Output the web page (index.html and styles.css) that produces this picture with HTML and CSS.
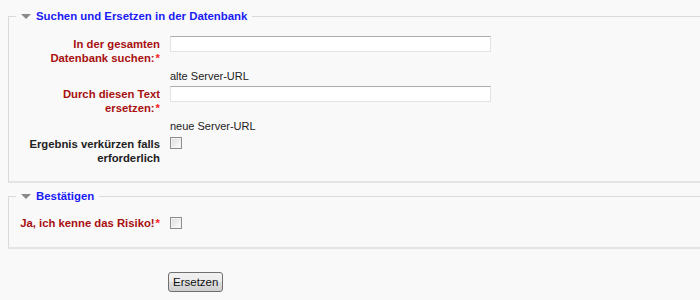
FILE: index.html
```html
<!DOCTYPE html>
<html lang="de">
<head>
<meta charset="utf-8">
<title>Suchen und Ersetzen</title>
<link rel="stylesheet" href="styles.css">
</head>
<body>
<form class="mform">
  <fieldset class="fs">
    <legend class="fs-legend"><span class="tri"></span>Suchen und Ersetzen in der Datenbank</legend>
    <div class="fitem">
      <label class="flabel req">In der gesamten Datenbank suchen:<span class="star">*</span></label>
      <div class="felem"><input type="text" class="ftext"></div>
    </div>
    <div class="fitem">
      <div class="flabel"></div>
      <div class="felem fdesc">alte Server-URL</div>
    </div>
    <div class="fitem">
      <label class="flabel req">Durch diesen Text ersetzen:<span class="star">*</span></label>
      <div class="felem"><input type="text" class="ftext"></div>
    </div>
    <div class="fitem">
      <div class="flabel"></div>
      <div class="felem fdesc">neue Server-URL</div>
    </div>
    <div class="fitem">
      <label class="flabel">Ergebnis verkürzen falls erforderlich</label>
      <div class="felem"><input type="checkbox" class="fcheck"></div>
    </div>
  </fieldset>
  <fieldset class="fs fs2">
    <legend class="fs-legend"><span class="tri"></span>Bestätigen</legend>
    <div class="fitem">
      <label class="flabel req">Ja, ich kenne das Risiko!<span class="star">*</span></label>
      <div class="felem"><input type="checkbox" class="fcheck"></div>
    </div>
  </fieldset>
  <div class="fitem factions">
    <div class="flabel"></div>
    <div class="felem"><button type="button" class="fbtn">Ersetzen</button></div>
  </div>
</form>
</body>
</html>
```

FILE: styles.css
```css
html, body {
  background: #f9f9f9;
}
body {
  margin: 8px 0 0 8px;
  font-family: "Liberation Sans", Arial, sans-serif;
  font-size: 11px;
  color: #222;
}
.mform {
  margin: 0;
}
.fs {
  margin: 0;
  padding: 13px 0 16px 0;
  border-style: solid;
  border-color: #dadada;
  border-width: 1px 0 2px 1px;
  border-bottom-color: #e4e4e4;
  min-width: 0;
}
.fs2 {
  margin-top: 5px;
  padding-top: 12px;
  padding-bottom: 17px;
}
.fs-legend {
  margin-left: 7px;
  padding: 0 5px;
  font-size: 11.4px;
  line-height: 16px;
  font-weight: bold;
  color: #1a1af5;
  display: flex;
  align-items: center;
}
.tri {
  width: 0;
  height: 0;
  border-left: 5px solid transparent;
  border-right: 5px solid transparent;
  border-top: 5px solid #8a8a8a;
  margin-right: 5px;
}
.fitem {
  display: grid;
  grid-template-columns: 153px 1fr;
  column-gap: 8px;
  margin-bottom: 4px;
  line-height: 14px;
}
.fitem:last-child {
  margin-bottom: 0;
}
.flabel {
  box-sizing: border-box;
  padding-left: 6px;
  padding-right: 2px;
  text-align: right;
  font-weight: bold;
  font-size: 11.3px;
  color: #222;
}
.flabel.req {
  color: #a81010;
}
.star {
  display: inline-block;
  margin-left: 1px;
  color: #ff2020;
}
.felem {
  display: flex;
  align-items: flex-start;
}
.fdesc {
  color: #222;
}
.ftext {
  box-sizing: border-box;
  width: 321px;
  height: 16px;
  margin: -1px 0 0 0;
  padding: 0 2px;
  background: #fff;
  border-style: solid;
  border-width: 1px;
  border-color: #ababab #e3e3e3 #e3e3e3 #e3e3e3;
  font: 11px "Liberation Sans", Arial, sans-serif;
}
.fcheck {
  appearance: none;
  -webkit-appearance: none;
  box-sizing: border-box;
  width: 12px;
  height: 12px;
  margin: 0;
  border: 1px solid #8e8e8e;
  background: linear-gradient(135deg, #dcdcdc 0%, #f4f4f4 70%, #fff 100%);
  box-shadow: inset 0 0 0 1px #f2f2f2;
}
.fs2 .fcheck {
  margin-top: 1px;
}
.factions {
  margin-top: 23px;
}
.fbtn {
  box-sizing: border-box;
  height: 20px;
  margin: 0 0 0 -1px;
  padding: 0 4px;
  font: 11.5px "Liberation Sans", Arial, sans-serif;
  color: #111;
  border: 1px solid #707070;
  border-radius: 3px;
  background: linear-gradient(#f2f2f2 0%, #ebebeb 50%, #dddddd 51%, #cfcfcf 100%);
}
```
